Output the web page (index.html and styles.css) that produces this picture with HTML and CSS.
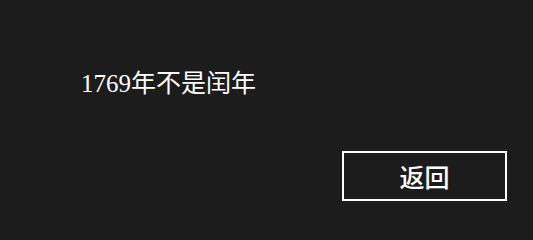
FILE: index.html
```html
<!DOCTYPE html>
<html lang="zh">
<head>
<meta charset="utf-8">
<link rel="stylesheet" href="styles.css">
</head>
<body>
<div class="page">
  <p class="message">1769年不是闰年</p>
  <div class="actions">
    <button class="back">返回</button>
  </div>
</div>
</body>
</html>
```
FILE: styles.css
```css
html, body {
  margin: 0;
  padding: 0;
  background: #1c1c1c;
}
.page {
  width: 533px;
  height: 216px;
  box-sizing: border-box;
  padding: 68px 26px 0 81px;
  display: flex;
  flex-direction: column;
}
.message {
  margin: 0;
  color: #ffffff;
  font-family: "Liberation Serif", "Noto Sans CJK SC", serif;
  font-size: 25px;
  line-height: 32px;
}
.actions {
  margin-top: 51px;
  display: flex;
  justify-content: flex-end;
}
.back {
  width: 165px;
  height: 50px;
  box-sizing: border-box;
  border: 2px solid #ffffff;
  background: #1c1c1c;
  color: #ffffff;
  font-family: "Noto Sans CJK SC", sans-serif;
  font-size: 25px;
  font-weight: 500;
  padding: 0;
  line-height: 1;
}
```
